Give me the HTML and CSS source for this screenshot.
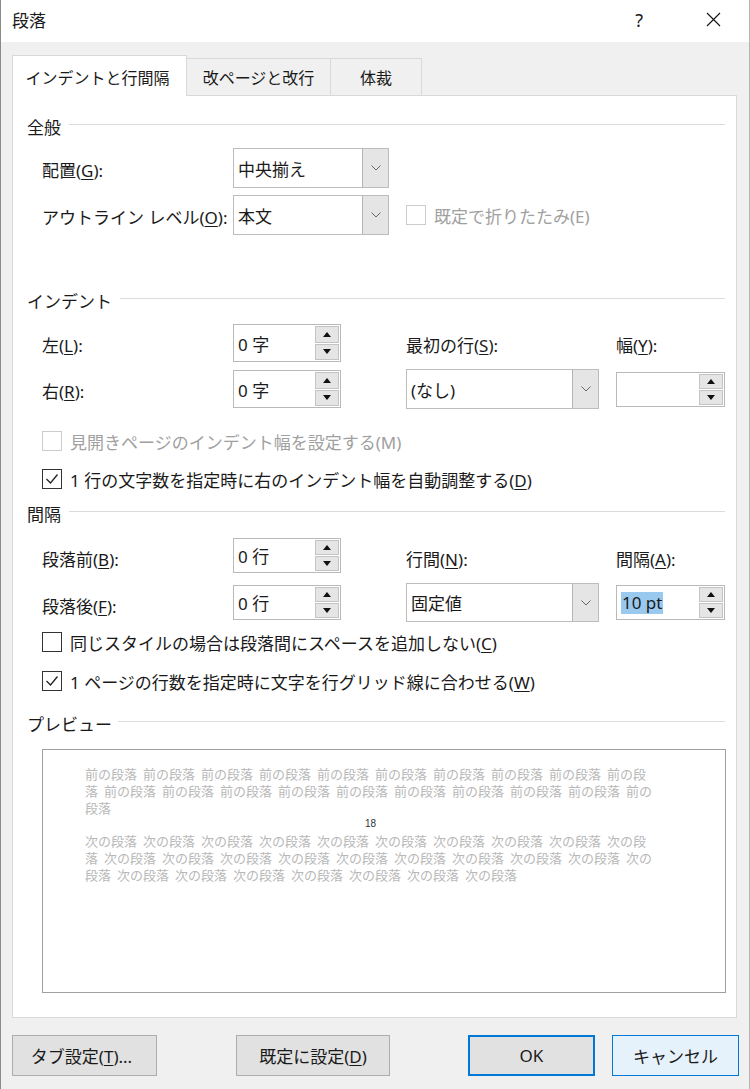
FILE: index.html
```html
<!DOCTYPE html>
<html lang="ja">
<head>
<meta charset="utf-8">
<title>段落</title>
<link rel="stylesheet" href="styles.css">
</head>
<body>
<div class="win">
  <div class="titlebar">
    <span class="title">段落</span>
    <span class="help">?</span>
    <span class="close"><svg width="15" height="15" viewBox="0 0 15 15"><path d="M1 1 L14 14 M14 1 L1 14" stroke="#111" stroke-width="1.1" fill="none"/></svg></span>
  </div>

  <div class="tabs">
    <div class="tab active">インデントと行間隔</div>
    <div class="tab t2">改ページと改行</div>
    <div class="tab t3">体裁</div>
  </div>

  <div class="panel">
    <div class="hdr h-general"><span>全般</span><i class="rule"></i></div>

    <div class="row r1">
      <span class="lbl">配置(<u>G</u>):</span>
      <div class="combo c-small"><span class="val">中央揃え</span><b class="arrow"><svg width="10" height="6" viewBox="0 0 10 6"><path d="M0.5 0.5 L5 5 L9.5 0.5" stroke="#666" stroke-width="1" fill="none"/></svg></b></div>
    </div>
    <div class="row r2">
      <span class="lbl">アウトライン レベル(<u>O</u>):</span>
      <div class="combo c-small"><span class="val">本文</span><b class="arrow"><svg width="10" height="6" viewBox="0 0 10 6"><path d="M0.5 0.5 L5 5 L9.5 0.5" stroke="#666" stroke-width="1" fill="none"/></svg></b></div>
      <div class="chk disabled inline"><i class="box"></i><span>既定で折りたたみ(E)</span></div>
    </div>

    <div class="hdr h-indent"><span>インデント</span><i class="rule"></i></div>

    <div class="grow g1">
      <span class="lbl">左(<u>L</u>):</span>
      <div class="spin"><span class="val">0 字</span><div class="btns"><b class="up"></b><b class="dn"></b></div></div>
      <span></span>
      <span class="lbl">最初の行(<u>S</u>):</span>
      <span></span>
      <span class="lbl">幅(<u>Y</u>):</span>
    </div>
    <div class="grow g2">
      <span class="lbl">右(<u>R</u>):</span>
      <div class="spin"><span class="val">0 字</span><div class="btns"><b class="up"></b><b class="dn"></b></div></div>
      <span></span>
      <div class="combo c-wide"><span class="val">(なし)</span><b class="arrow"><svg width="10" height="6" viewBox="0 0 10 6"><path d="M0.5 0.5 L5 5 L9.5 0.5" stroke="#666" stroke-width="1" fill="none"/></svg></b></div>
      <span></span>
      <div class="spin s-short"><span class="val"></span><div class="btns"><b class="up"></b><b class="dn"></b></div></div>
    </div>

    <div class="chk disabled c-mihiraki"><i class="box"></i><span>見開きページのインデント幅を設定する(M)</span></div>
    <div class="chk c-auto"><i class="box"><svg width="18" height="18" viewBox="0 0 18 18"><path d="M3.5 9 L7.5 13 L14.5 4.5" stroke="#222" stroke-width="1.3" fill="none"/></svg></i><span>1 行の文字数を指定時に右のインデント幅を自動調整する(<u>D</u>)</span></div>

    <div class="hdr h-space"><span>間隔</span><i class="rule"></i></div>

    <div class="grow g3">
      <span class="lbl">段落前(<u>B</u>):</span>
      <div class="spin s-mid"><span class="val">0 行</span><div class="btns"><b class="up"></b><b class="dn"></b></div></div>
      <span></span>
      <span class="lbl">行間(<u>N</u>):</span>
      <span></span>
      <span class="lbl">間隔(<u>A</u>):</span>
    </div>
    <div class="grow g4">
      <span class="lbl">段落後(<u>F</u>):</span>
      <div class="spin s-mid"><span class="val">0 行</span><div class="btns"><b class="up"></b><b class="dn"></b></div></div>
      <span></span>
      <div class="combo c-wide c-line"><span class="val">固定値</span><b class="arrow"><svg width="10" height="6" viewBox="0 0 10 6"><path d="M0.5 0.5 L5 5 L9.5 0.5" stroke="#666" stroke-width="1" fill="none"/></svg></b></div>
      <span></span>
      <div class="spin s-mid"><span class="val"><span class="sel">10 pt</span></span><div class="btns"><b class="up"></b><b class="dn"></b></div></div>
    </div>

    <div class="chk c-same"><i class="box"></i><span>同じスタイルの場合は段落間にスペースを追加しない(<u>C</u>)</span></div>
    <div class="chk c-grid"><i class="box"><svg width="18" height="18" viewBox="0 0 18 18"><path d="M3.5 9 L7.5 13 L14.5 4.5" stroke="#222" stroke-width="1.3" fill="none"/></svg></i><span>1 ページの行数を指定時に文字を行グリッド線に合わせる(<u>W</u>)</span></div>

    <div class="hdr h-preview"><span>プレビュー</span><i class="rule"></i></div>

    <div class="preview">
      <div class="pl">前の段落 前の段落 前の段落 前の段落 前の段落 前の段落 前の段落 前の段落 前の段落 前の段</div>
      <div class="pl">落 前の段落 前の段落 前の段落 前の段落 前の段落 前の段落 前の段落 前の段落 前の段落 前の</div>
      <div class="pl">段落</div>
      <div class="pl num">18</div>
      <div class="pl">次の段落 次の段落 次の段落 次の段落 次の段落 次の段落 次の段落 次の段落 次の段落 次の段</div>
      <div class="pl">落 次の段落 次の段落 次の段落 次の段落 次の段落 次の段落 次の段落 次の段落 次の段落 次の</div>
      <div class="pl">段落 次の段落 次の段落 次の段落 次の段落 次の段落 次の段落 次の段落</div>
    </div>
  </div>

  <div class="footer">
    <button class="btn b-tab">タブ設定(<u>T</u>)...</button>
    <button class="btn b-def">既定に設定(<u>D</u>)</button>
    <button class="btn b-ok">OK</button>
    <button class="btn b-cancel">キャンセル</button>
  </div>
</div>
</body>
</html>
```

FILE: styles.css
```css
* { box-sizing: border-box; }
html, body { margin: 0; padding: 0; }
body {
  width: 750px;
  height: 1089px;
  background: #f0f0f0;
  font-family: "Noto Sans", "Noto Sans CJK JP", sans-serif;
  font-size: 17px;
  color: #1a1a1a;
  overflow: hidden;
}
.win {
  width: 750px;
  height: 1089px;
  border-left: 1px solid #8a8a8a;
  border-right: 1px solid #b5b5b5;
}
u { text-decoration: underline; text-underline-offset: 2px; text-decoration-thickness: 1px; }

/* title bar */
.titlebar {
  height: 42px;
  background: #fff;
  display: flex;
  align-items: center;
  padding: 0 0 3px 11px;
}
.title { font-size: 17px; flex: 1; }
.help { font-size: 18px; margin-right: 63px; }
.close { width: 15px; height: 15px; margin-right: 28px; display: flex; }

/* tabs */
.tabs {
  margin: 13px 0 0 11px;
  height: 40px;
  display: flex;
  align-items: flex-end;
  position: relative;
  z-index: 2;
}
.tab {
  height: 37px;
  background: #f0f0f0;
  border: 1px solid #d9d9d9;
  border-bottom: none;
  display: flex;
  align-items: center;
  justify-content: center;
  font-size: 16px;
  padding-bottom: 1px;
}
.tab.active {
  width: 175px;
  height: 41px;
  background: #fff;
  margin-bottom: -1px;
  padding-top: 2px;
  padding-right: 4px;
}
.t2 { width: 144px; border-left: none; }
.t3 { width: 91px; border-left: none; }

/* panel */
.panel {
  margin-left: 11px;
  width: 725px;
  height: 923px;
  background: #fff;
  border: 1px solid #d9d9d9;
  padding: 0 11px 0 14px;
  display: flex;
  flex-direction: column;
  position: relative;
  z-index: 1;
}
.hdr {
  height: 20px;
  display: flex;
  align-items: center;
  font-size: 17px;
}
.hdr .rule {
  flex: 1;
  height: 1px;
  background: #dcdcdc;
  margin: -4px 0 0 8px;
}
.h-general { margin-top: 20px; }
.h-indent { margin-top: 55px; }
.h-space { margin-top: 14px; }
.h-preview { margin-top: 22px; }
.h-preview .rule { margin-left: 6px; }

.row {
  display: flex;
  align-items: center;
  margin-left: 15px;
  height: 40px;
}
.row .lbl { width: 191px; }
.r1 { margin-top: 12px; }
.r2 { margin-top: 7px; }

.lbl { white-space: nowrap; padding-top: 3px; }

/* combo */
.combo {
  display: flex;
  height: 40px;
  background: #fff;
  border: 1px solid #bcbcbc;
}
.c-small { width: 156px; }
.c-wide { width: 193px; height: 40px; }
.c-line { height: 39px; }
.combo .val { flex: 1; padding: 0 0 0 4px; display: flex; align-items: center; white-space: nowrap; }
.combo .arrow {
  width: 26px;
  background: #e5e5e5;
  border-left: 1px solid #b4b4b4;
  display: flex;
  align-items: center;
  justify-content: center;
}

/* spin */
.spin {
  display: flex;
  height: 38px;
  background: #fff;
  border: 1px solid #b9b9b9;
}
.s-mid { height: 35px; }
.s-short { height: 35px; }
.spin .val { flex: 1; padding-left: 4px; display: flex; align-items: center; white-space: nowrap; }
.spin .sel { background: #99c9ef; padding: 0 1px; line-height: 22px; }
.btns {
  width: 25px;
  display: flex;
  flex-direction: column;
  padding: 1px 1px 1px 0;
  gap: 1px;
}
.btns b {
  flex: 1;
  background: #e5e5e5;
  border: 1px solid #c4c4c4;
  display: flex;
  align-items: center;
  justify-content: center;
}
.btns .up::before {
  content: "";
  border-left: 4.5px solid transparent;
  border-right: 4.5px solid transparent;
  border-bottom: 5px solid #111;
}
.btns .dn::before {
  content: "";
  border-left: 4.5px solid transparent;
  border-right: 4.5px solid transparent;
  border-top: 5px solid #111;
}

/* grid rows */
.grow {
  display: grid;
  grid-template-columns: 191px 108px 65px 193px 17px 109px;
  align-items: center;
  margin-left: 15px;
}
.g1 { margin-top: 14px; height: 38px; }
.g2 { margin-top: 7px; height: 39px; }
.g3 { margin-top: 15px; height: 35px; }
.g4 { margin-top: 10px; height: 35px; }
.g3 .lbl, .g4 .lbl { padding-top: 5px; }

/* checkboxes */
.chk {
  display: flex;
  align-items: center;
  height: 20px;
  margin-left: 15px;
  white-space: nowrap;
}
.chk .box {
  width: 20px;
  height: 20px;
  border: 1px solid #333;
  background: #fff;
  margin-right: 8px;
  display: flex;
  align-items: center;
  justify-content: center;
  flex: none;
}
.chk.disabled { color: #a0a0a0; }
.chk.disabled .box { border-color: #cccccc; }
.chk.inline { margin-left: 17px; }
.c-mihiraki { margin-top: 23px; }
.c-auto { margin-top: 18px; }
.c-same { margin-top: 14px; }
.c-grid { margin-top: 19px; }

/* preview */
.preview {
  margin: 16px 0 0 15px;
  width: 684px;
  height: 244px;
  border: 1px solid #a0a0a0;
  background: #fff;
  padding: 15px 0 0 42px;
  font-family: "Noto Sans CJK JP", sans-serif;
  font-size: 13px;
  color: #b8b8b8;
}
.pl {
  height: 17px;
  line-height: 17px;
  white-space: pre;
  word-spacing: 3.1px;
}
.pl.num {
  font-family: "Liberation Sans", sans-serif;
  font-size: 10px;
  color: #333;
  padding-left: 280px;
  height: 16px;
  line-height: 16px;
}

/* footer */
.footer {
  display: flex;
  margin: 17px 0 0 11px;
  height: 41px;
}
.btn {
  height: 41px;
  font-family: "Noto Sans", "Noto Sans CJK JP", sans-serif;
  font-size: 17px;
  color: #1a1a1a;
  background: #e1e1e1;
  border: 1px solid #adadad;
  padding: 0;
  margin: 0;
}
.b-tab { width: 145px; padding-right: 6px; }
.b-def { width: 154px; margin-left: 79px; }
.b-ok { width: 127px; margin-left: 78px; border: 2px solid #0078d7; }
.b-cancel { width: 127px; margin-left: 17px; background: #e5f1fb; border: 1px solid #0078d7; }
```
